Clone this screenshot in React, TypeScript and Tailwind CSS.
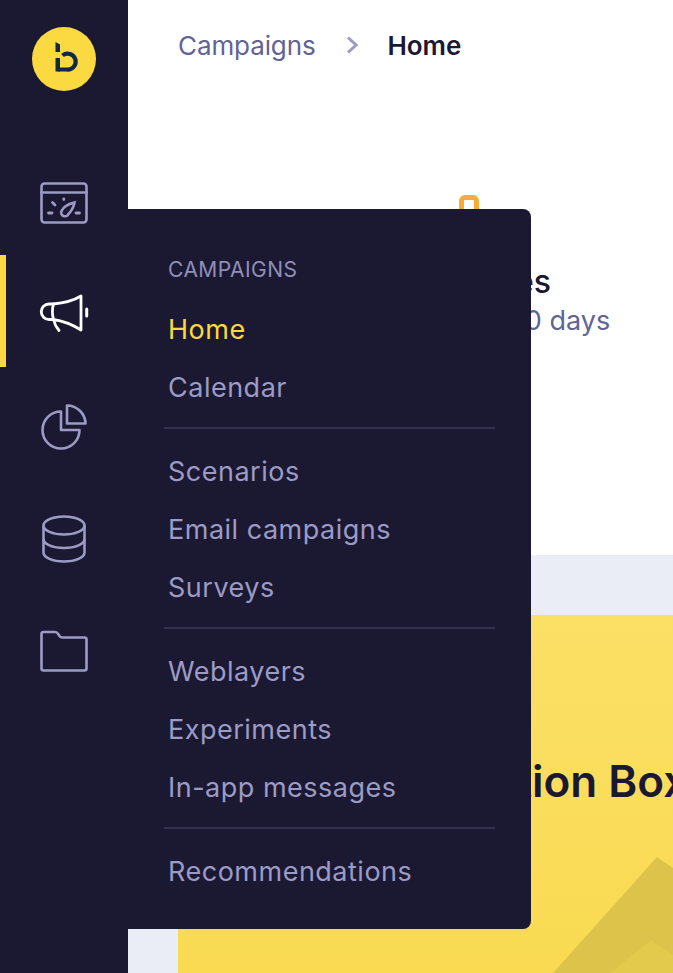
import React from "react";

const menuGroups = [
  ["Home", "Calendar"],
  ["Scenarios", "Email campaigns", "Surveys"],
  ["Weblayers", "Experiments", "In-app messages"],
  ["Recommendations"],
];

const Logo = () => (
  <svg width="64" height="64" viewBox="32 27 64 64">
    <circle cx="64" cy="59" r="32" fill="#fbd941" />
    <path d="M55.500 42l4.500 2.500v7.500h-4.500z" fill="#0e2a45" />
    <path d="M62.500 55.500A8 8 0 1 1 66.500 69.500H58" fill="none" stroke="#0e2a45" strokeWidth="4.200" />
    <rect x="55.500" y="58" width="4.500" height="13.500" fill="#0e2a45" />
  </svg>
);

const DashboardIcon = () => (
  <svg width="56" height="56" viewBox="36 171 56 56" fill="none" stroke="#9b9bc6" strokeWidth="2.600" strokeLinecap="round">
    <rect x="41.500" y="183.500" width="45" height="39" rx="3" />
    <path d="M41.500 192.500h45" />
    <path d="M74.500 202.500c-6 1.500-11.500 5-13 8.500a3.800 3.800 0 0 0 7 3c3-3 5-6.500 6-11.500z" />
    <path d="M48.500 213h3.500M76 213h3.500M52.500 202.500l2.500 2.500M63.800 199v.5" strokeWidth="2.800" />
  </svg>
);

const MegaphoneIcon = () => (
  <svg width="56" height="56" viewBox="36 283 56 56" fill="none" stroke="#fff" strokeWidth="2.800" strokeLinecap="round" strokeLinejoin="round">
    <path d="M81 296v34c-8-5-17-9-28-10.500h-4a7.500 7.500 0 0 1 0-15.500h4c11-1 20-3 28-8z" />
    <path d="M53.500 304c-1.500 5-1.500 10 0 15.500 1 4.500 3 8 5.500 11" />
    <path d="M86.700 309v7" strokeWidth="3" />
  </svg>
);

const PieIcon = () => (
  <svg width="56" height="56" viewBox="36 395 56 56" fill="none" stroke="#9b9bc6" strokeWidth="2.600" strokeLinejoin="round">
    <path d="M61 411.500a18.500 18.500 0 1 0 18.500 18.500h-18.500z" />
    <path d="M67 405.500v18h18.500a18.500 18.500 0 0 0-18.500-18z" />
  </svg>
);

const DatabaseIcon = () => (
  <svg width="56" height="56" viewBox="36 507 56 56" fill="none" stroke="#9b9bc6" strokeWidth="2.600">
    <ellipse cx="64" cy="525.500" rx="20.500" ry="9" />
    <path d="M43.500 525.500v27c0 5 9 9 20.500 9s20.500-4 20.500-9v-27" />
    <path d="M43.500 539c0 5 9 9 20.500 9s20.500-4 20.500-9" />
  </svg>
);

const FolderIcon = () => (
  <svg width="56" height="56" viewBox="36 619 56 56" fill="none" stroke="#9b9bc6" strokeWidth="2.600" strokeLinejoin="round">
    <path d="M43.500 632h11.500c1.500 0 2.500 .7 3.200 2l1.300 2c.7 1 1.500 1.500 2.800 1.500H84.500c1.200 0 2 .8 2 2V668.500c0 1.200-.8 2-2 2H43.500c-1.200 0-2-.8-2-2V634c0-1.200.8-2 2-2z" />
  </svg>
);

const Sidebar = () => (
  <aside className="w-[128px] shrink-0 bg-[#1b1832] flex flex-col items-center">
    <div className="mt-[27px] mb-[52px] h-[64px]">
      <Logo />
    </div>
    <div className="w-full h-[112px] flex items-center justify-center">
      <DashboardIcon />
    </div>
    <div className="relative w-full h-[112px] flex items-center justify-center border-l-[6px] border-[#fbd941] pr-[6px]">
      <MegaphoneIcon />
    </div>
    <div className="w-full h-[112px] flex items-center justify-center">
      <PieIcon />
    </div>
    <div className="w-full h-[112px] flex items-center justify-center">
      <DatabaseIcon />
    </div>
    <div className="w-full h-[112px] flex items-center justify-center">
      <FolderIcon />
    </div>
  </aside>
);

const Flyout = () => (
  <div className="absolute left-[128px] top-[209px] w-[403px] h-[720px] bg-[#1b1832] rounded-r-lg pt-[49px] pl-[36px] pr-[36px]">
    <div className="pl-[4px] text-[21px] leading-[24px] tracking-[0.45px] text-[#8f90b8] uppercase mb-[19px]">
      Campaigns
    </div>
    {menuGroups.map((group, i) => (
      <div key={i}>
        {i > 0 && <div className="h-[2px] bg-[#33314f] mt-[10px] mb-[14px]" />}
        {group.map((item) => (
          <div
            key={item}
            className={
              "pl-[4px] h-[58px] flex items-center text-[27px] tracking-[0.5px] " +
              (item === "Home" ? "text-[#fbd941]" : "text-[#9b9bc6]")
            }
          >
            {item}
          </div>
        ))}
      </div>
    ))}
  </div>
);

export default function App() {
  return (
    <div className="relative flex h-[973px] overflow-hidden bg-[#ebedf6] font-['Inter',sans-serif]">
      <Sidebar />
      <main className="flex-1 min-w-0">
        <div className="h-[555px] bg-white">
          <div className="flex items-center h-[90px] pl-[50px] text-[26px] tracking-[-0.1px]">
            <span className="text-[#5f6396]">Campaigns</span>
            <svg width="12" height="18" viewBox="0 0 12 18" fill="none" stroke="#9b9bc6" strokeWidth="3" className="ml-[30px] mr-[30px]">
              <path d="M2 1.500l8 7.500-8 7.500" />
            </svg>
            <span className="font-semibold text-[#1b1832]">Home</span>
          </div>
          <div className="flex flex-col items-start pl-[331px] pt-[105px]">
            <div className="w-[20px] h-[20px] border-[5px] border-[#f7ab3a] rounded-md" />
          </div>
          <div className="w-[423px] mt-[47px] text-right text-[32px] leading-[40px] font-medium text-[#1b1832] whitespace-nowrap">
            Sent messages
          </div>
          <div className="text-[27px] leading-[36px] pl-[319px] pt-[1px] text-[#5f6396] whitespace-nowrap">
            Last 30 days
          </div>
        </div>
        <div className="pt-[60px] pl-[50px]">
          <div className="relative h-[358px] bg-gradient-to-b from-[#fbe066] to-[#f9da51] overflow-hidden">
            <h1 className="pt-[140px] pl-[47px] text-[44px] leading-[52px] font-semibold text-[#1b1832] whitespace-nowrap">
              Recommendation Box
            </h1>
            <svg width="495" height="358" viewBox="178 615 495 358" className="absolute inset-0">
              <path d="M553 973L657 857L673 868V973z" fill="#ddc34a" />
              <path d="M610 973L651 940L673 955V973z" fill="#e3c94c" />
            </svg>
          </div>
        </div>
      </main>
      <Flyout />
    </div>
  );
}
